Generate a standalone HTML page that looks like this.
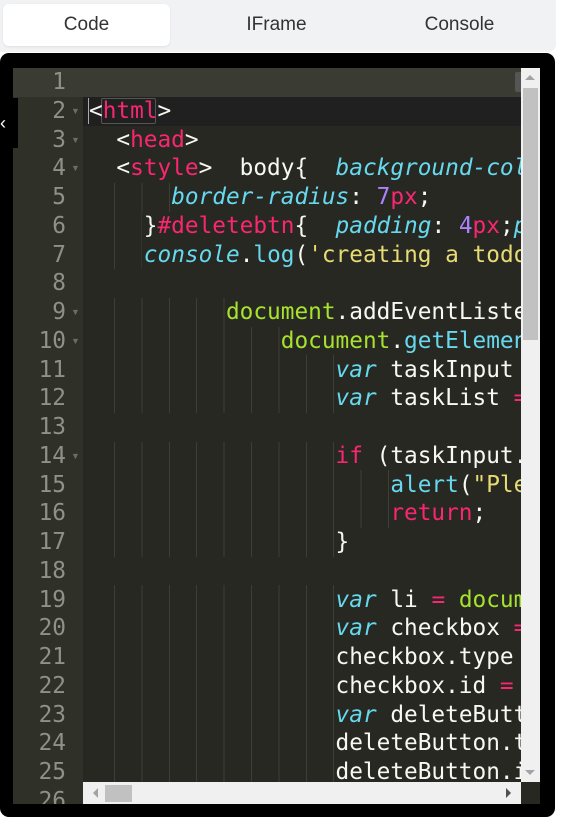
<!DOCTYPE html>
<html><head><style>
*{margin:0;padding:0;box-sizing:border-box}
body{width:571px;height:833px;background:#fff;position:relative;overflow:hidden;font-family:"Liberation Sans",sans-serif}
.tabs{position:absolute;left:0;top:0;width:556px;height:52px;background:#f1f2f4;border-radius:0 0 8px 0}
.tab{position:absolute;top:4px;height:42px;line-height:42px;text-align:center;font-size:19px;color:#333}
.act{background:#fff;border-radius:6px;box-shadow:0 1px 2px rgba(0,0,0,.08)}
.frame{position:absolute;left:0;top:53px;width:555px;height:764px;background:#000;border-radius:9px}
.ed{position:absolute;left:13px;top:68px;width:527px;height:736px;background:#272822;overflow:hidden}
.gut{position:absolute;left:0;top:0;width:70px;height:736px;background:#2f3129}
.ln{position:absolute;left:0;width:508px;height:28.75px}
.num{position:absolute;left:0;width:53px;text-align:right;color:#8f908a;font:22.75px/28.75px "DejaVu Sans Mono",monospace}
.fold{position:absolute;left:58px;color:#6b6c66;font-size:9px;line-height:28.75px}
.code{position:absolute;left:76px;white-space:pre;color:#f8f8f2;font:22.75px/28.75px "DejaVu Sans Mono","Liberation Mono",monospace}
.p{color:#f92672}.c{color:#66d9ef}.i{color:#66d9ef;font-style:italic}.g{color:#a6e22e}.s{color:#e6db74}.n{color:#ae81ff}
.gd{position:absolute;left:101px;height:28.75px;background:repeating-linear-gradient(to right,#3d3e37 0 1px,transparent 1px 27.4px)}
</style></head><body>
<div class="tabs">
<div class="tab act" style="left:3px;width:167px">Code</div>
<div class="tab" style="left:193px;width:167px">IFrame</div>
<div class="tab" style="left:376px;width:167px">Console</div>
</div>
<div class="frame"></div>
<div class="ed">
<div class="gut"></div>
<div class="ln" style="top:0;background:#3a3b32;width:508px"></div>
<div class="ln" style="top:28.75px;background:#202020;left:70px;width:438px"></div>
<div style="position:absolute;left:75px;top:30px;width:1px;height:26px;background:#aaa"></div>
<div style="position:absolute;left:88px;top:30px;width:55px;height:26px;border:1px solid #555;border-radius:2px"></div>
<div class="gd" style="top:115px;width:56px"></div>
<div class="gd" style="top:144px;width:28px"></div>
<div class="gd" style="top:172px;width:28px"></div>
<div class="gd" style="top:230px;width:112px"></div>
<div class="gd" style="top:259px;width:167px"></div>
<div class="gd" style="top:287px;width:222px;height:57.5px"></div>
<div class="gd" style="top:374px;width:222px"></div>
<div class="gd" style="top:402px;width:277px;height:57.5px"></div>
<div class="gd" style="top:460px;width:222px"></div>
<div class="gd" style="top:517px;width:222px;height:220px"></div>
<div class="code" style="top:0">
<span>&lt;</span><span class="p">html</span>&gt;
  &lt;<span class="p">head</span>&gt;
  &lt;<span class="p">style</span>&gt;  body{  <span class="i">background-color</span>
      <span class="i">border-radius</span>: <span class="n">7</span><span class="p">px</span>;
    }<span class="p">#deletebtn</span>{  <span class="i">padding</span>: <span class="n">4</span><span class="p">px</span>;<span class="i">padding</span>
    <span class="i">console</span>.<span class="c">log</span>(<span class="s">'creating a todo</span>

          <span class="g">document</span>.addEventListener
              <span class="g">document</span>.<span class="c">getElementById</span>
                  <span class="i">var</span> taskInput <span class="p">=</span>
                  <span class="i">var</span> taskList <span class="p">=</span>

                  <span class="p">if</span> (taskInput.value
                      <span class="c">alert</span>(<span class="s">"Please</span>
                      <span class="p">return</span>;
                  }

                  <span class="i">var</span> li <span class="p">=</span> <span class="g">document</span>
                  <span class="i">var</span> checkbox <span class="p">=</span>
                  checkbox.type <span class="p">=</span>
                  checkbox.id <span class="p">=</span>
                  <span class="i">var</span> deleteButton
                  deleteButton.text
                  deleteButton.id
</div>
<div class="num" style="top:0">1<br>2<br>3<br>4<br>5<br>6<br>7<br>8<br>9<br>10<br>11<br>12<br>13<br>14<br>15<br>16<br>17<br>18<br>19<br>20<br>21<br>22<br>23<br>24<br>25<br>26</div>
<div class="fold" style="top:28.75px">▼</div>
<div class="fold" style="top:57.5px">▼</div>
<div class="fold" style="top:86.25px">▼</div>
<div class="fold" style="top:230px">▼</div>
<div class="fold" style="top:258.75px">▼</div>
<div class="fold" style="top:373.75px">▼</div>
<div style="position:absolute;left:508px;top:0;width:19px;height:714px;background:#f0f0f0"></div>
<div style="position:absolute;left:510px;top:20px;width:15px;height:252px;background:#c1c1c1"></div>
<div style="position:absolute;left:512px;top:7px;width:0;height:0;border:5px solid transparent;border-bottom:5px solid #a3a3a3;border-top:0"></div>
<div style="position:absolute;left:512px;top:702px;width:0;height:0;border:5px solid transparent;border-top:5px solid #a3a3a3;border-bottom:0"></div>
<div style="position:absolute;left:70px;top:714px;width:438px;height:22px;background:#f0f0f0"></div>
<div style="position:absolute;left:92px;top:717px;width:27px;height:17px;background:#c1c1c1"></div>
<div style="position:absolute;left:80px;top:720px;width:0;height:0;border:5px solid transparent;border-right:5px solid #a3a3a3;border-left:0"></div>
<div style="position:absolute;left:493px;top:720px;width:0;height:0;border:5px solid transparent;border-left:5px solid #505050;border-right:0"></div>
<div style="position:absolute;left:508px;top:714px;width:19px;height:22px;background:#272822"></div>
<div style="position:absolute;left:502px;top:4px;width:6px;height:20px;background:#555;border-radius:2px 0 0 2px"></div>
</div>
<div style="position:absolute;left:0;top:98px;width:18px;height:50px;background:#000;color:#fff;font-size:18px;line-height:50px">‹</div>
</body></html>
